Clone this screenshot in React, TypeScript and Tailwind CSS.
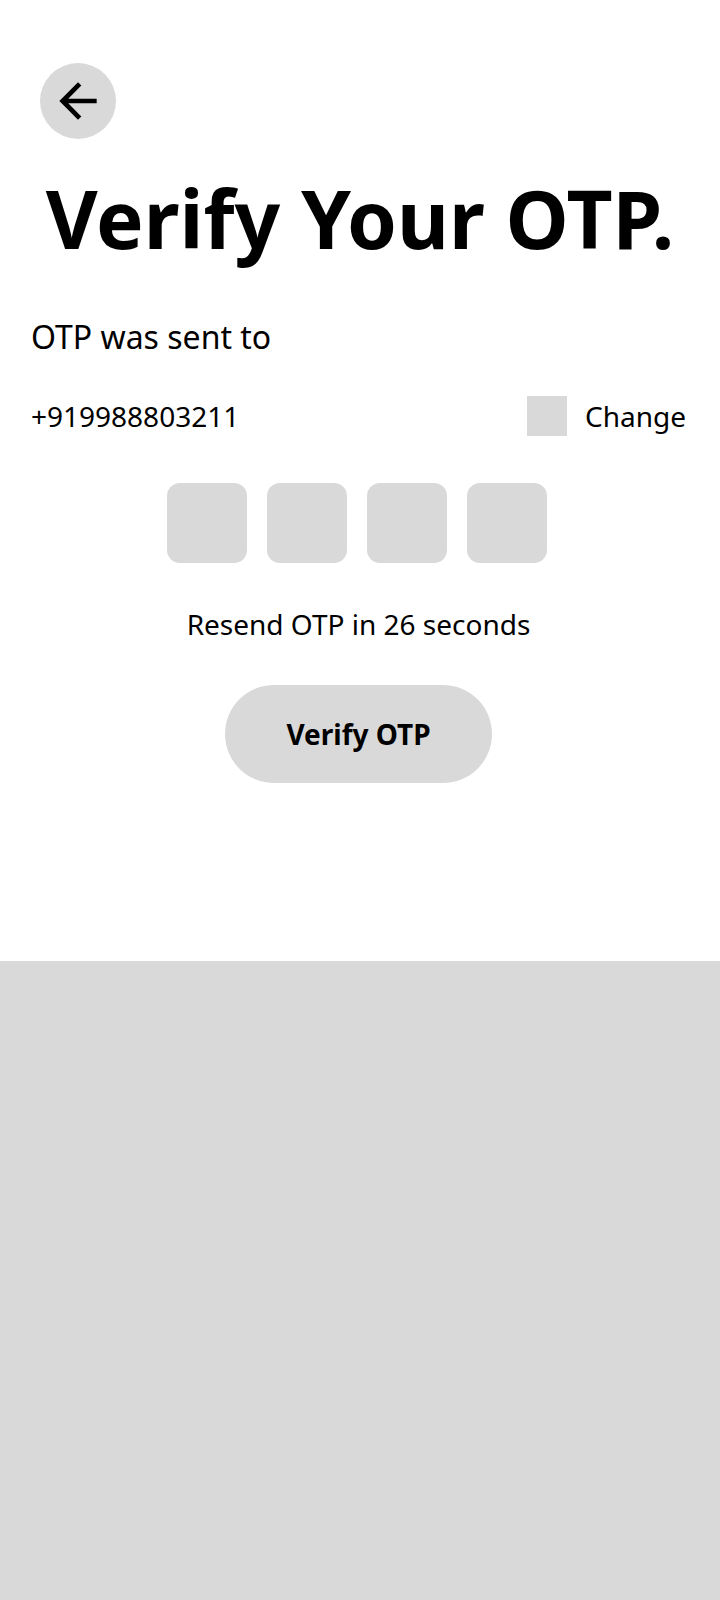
import { MdArrowBack } from "react-icons/md";

export default function App() {
  return (
    <div className="min-h-[1600px] flex flex-col bg-white text-black font-['Noto_Sans',sans-serif]">
      <div className="h-[961px] pl-[31px] pr-[34px] pt-[63px]">
        <button className="w-[76px] h-[76px] ml-[9px] rounded-full bg-[#d9d9d9] flex items-center justify-center">
          <MdArrowBack size={56} />
        </button>
        <h1 className="mt-[31px] -ml-[31px] -mr-[34px] text-center text-[80px] font-bold leading-[1.2] whitespace-nowrap">
          Verify Your OTP.
        </h1>
        <p className="mt-[47px] text-[32px]">OTP was sent to</p>
        <div className="mt-[34px] flex items-center justify-between">
          <span className="text-[28px]">+919988803211</span>
          <div className="flex items-center gap-[18px]">
            <div className="w-10 h-10 bg-[#d9d9d9]" />
            <span className="text-[28px]">Change</span>
          </div>
        </div>
        <div className="mt-[46px] pr-[3px] flex justify-center gap-5">
          {[0, 1, 2, 3].map((i) => (
            <input
              key={i}
              maxLength={1}
              className="w-20 h-20 rounded-[13px] bg-[#d9d9d9] text-center text-[32px] outline-none"
            />
          ))}
        </div>
        <p className="mt-[40px] text-center text-[28px]">Resend OTP in 26 seconds</p>
        <div className="mt-[40px] flex justify-center">
          <button className="w-[267px] h-[98px] rounded-full bg-[#d9d9d9] text-[28px] font-bold">
            Verify OTP
          </button>
        </div>
      </div>
      <div className="flex-1 bg-[#d9d9d9]" />
    </div>
  );
}
